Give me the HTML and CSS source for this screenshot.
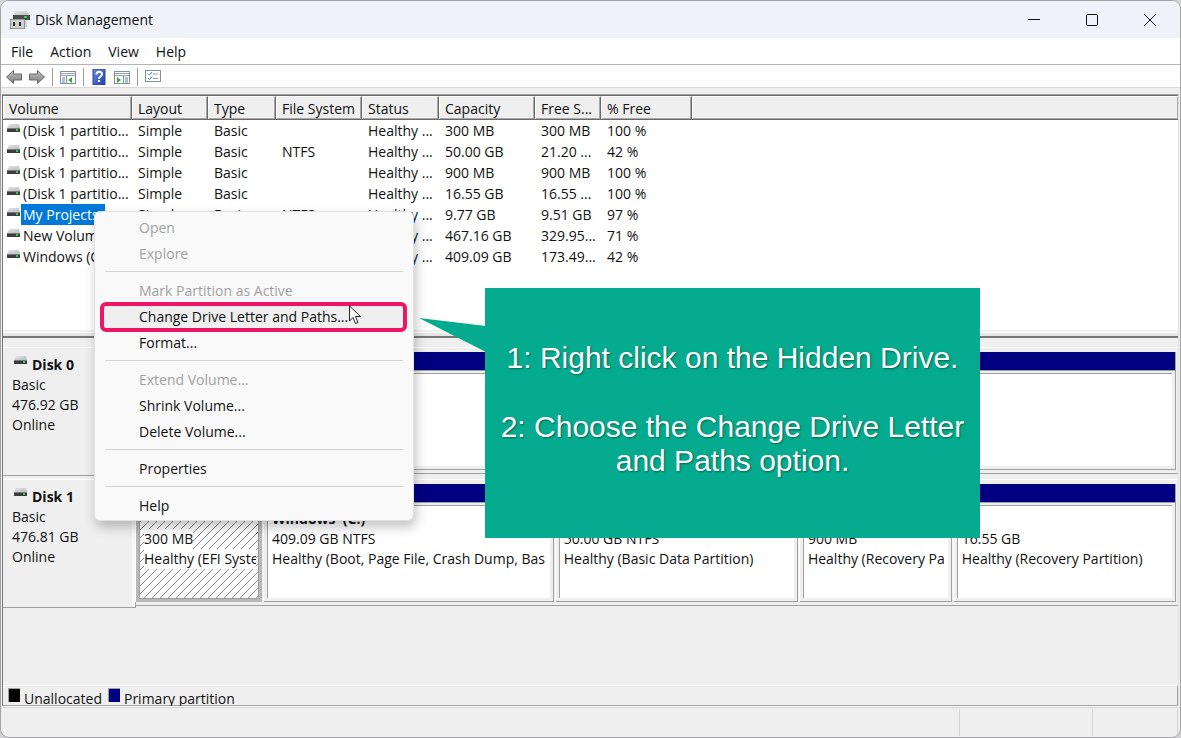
FILE: index.html
```html
<!DOCTYPE html>
<html lang="en">
<head>
<meta charset="utf-8">
<title>Disk Management</title>
<link rel="stylesheet" href="styles.css">
</head>
<body>
<svg class="defs" aria-hidden="true">
  <defs>
    <linearGradient id="lid" x1="0" y1="0" x2="1" y2="1"><stop offset="0" stop-color="#e4e5e7"/><stop offset="1" stop-color="#b9bcc0"/></linearGradient>
    <linearGradient id="help" x1="0" y1="0" x2="1" y2="1"><stop offset="0" stop-color="#6d8be0"/><stop offset="1" stop-color="#1f3fae"/></linearGradient>
    <linearGradient id="arrow" x1="0" y1="0" x2="0" y2="1"><stop offset="0" stop-color="#c4c4c4"/><stop offset="1" stop-color="#7c7c7c"/></linearGradient>
    <symbol id="drive" viewBox="0 0 14 10">
      <path d="M2 0h10l1 4H0z" fill="url(#lid)"/>
      <rect y="4" width="13" height="4" fill="#3b3d40"/>
      <path d="M0 4.500h13" stroke="#77797c"/>
      <rect x="9" y="5" width="2" height="2" fill="#2fd048"/>
    </symbol>
  </defs>
</svg>
<div class="window">
  <header class="titlebar">
    <svg class="app-icon" viewBox="0 0 20 20">
      <path d="M5 1h12l3 5H3z" fill="url(#lid)"/>
      <rect x="3" y="5" width="17" height="5" fill="#4a4d50"/>
      <rect x="14" y="6" width="3" height="2" fill="#2fd048"/>
      <rect x="14" y="10" width="3" height="7" fill="#d2d2d2"/>
      <rect x=".5" y="9.500" width="14" height="9" fill="#d0d0d0" stroke="#959595"/>
      <rect x="3" y="12" width="2" height="4" fill="#222"/><rect x="9" y="12" width="2" height="4" fill="#222"/>
    </svg>
    <h1 class="title">Disk Management</h1>
    <button class="caption" aria-label="Minimize"><svg viewBox="0 0 14 14"><path d="M1 6.500h12"/></svg></button>
    <button class="caption" aria-label="Maximize"><svg viewBox="0 0 14 14"><rect x="1.500" y="1.500" width="11" height="11" rx="1"/></svg></button>
    <button class="caption" aria-label="Close"><svg viewBox="0 0 14 14"><path d="M1 1l12 12M13 1L1 13"/></svg></button>
  </header>
  <nav class="menubar">
    <button>File</button><button>Action</button><button>View</button><button>Help</button>
  </nav>
  <div class="toolbar">
    <button aria-label="Back"><svg viewBox="0 0 16 16"><path d="M.5 8L7.500 1.500V5h8v6h-8v3.500z" fill="url(#arrow)" stroke="#686868"/></svg></button>
    <button aria-label="Forward"><svg viewBox="0 0 16 16"><path d="M15.500 8L8.500 1.500V5h-8v6h8v3.500z" fill="url(#arrow)" stroke="#686868"/></svg></button>
    <span class="divider"></span>
    <button aria-label="Show console tree"><svg viewBox="0 0 16 16"><rect x=".5" y="2.500" width="15" height="12" fill="#fff" stroke="#83909c"/><path d="M1 4.500h14M1 6.500h14" stroke="#93a1ae"/><path d="M6.500 7v8" stroke="#83909c"/><path d="M2 9h3M2 11h3M2 13h3" stroke="#4b89b8"/><path d="M12 8v6L8 11z" fill="#3ca62b"/></svg></button>
    <span class="divider"></span>
    <button aria-label="Help"><svg viewBox="0 0 16 16"><rect x="2" width="12" height="16" fill="url(#help)" stroke="#2b4797" stroke-width="1"/><path d="M5.500 5.500C5.500 2 11 2 11 5c0 2-3 2.500-3 5" fill="none" stroke="#fff" stroke-width="2"/><rect x="7" y="11" width="2" height="2" fill="#fff"/></svg></button>
    <button aria-label="Show action pane"><svg viewBox="0 0 16 16"><rect x=".5" y="2.500" width="15" height="12" fill="#fff" stroke="#83909c"/><path d="M1 4.500h14M1 6.500h14" stroke="#93a1ae"/><path d="M9.500 7v8" stroke="#83909c"/><path d="M11 9h3M11 11h3M11 13h3" stroke="#4b89b8"/><path d="M3 8v6l4-3z" fill="#3ca62b"/></svg></button>
    <span class="divider"></span>
    <button aria-label="Properties"><svg viewBox="0 0 16 16"><rect x=".5" y="1.500" width="15" height="11" fill="#fff" stroke="#83909c"/><path d="M8 5h5M8 9.500h5" stroke="#9a9a9a"/><path d="M3 4.500l1.500 1.500L7 3M3 9l1.500 1.500L7 7.500" fill="none" stroke="#2e7bd0"/></svg></button>
  </div>

  <main class="panes">
    <section class="list">
      <table>
        <colgroup><col class="c-vol"><col class="c-lay"><col class="c-type"><col class="c-fs"><col class="c-stat"><col class="c-cap"><col class="c-free"><col class="c-pct"><col></colgroup>
        <thead><tr><th>Volume</th><th>Layout</th><th>Type</th><th>File System</th><th>Status</th><th>Capacity</th><th>Free S...</th><th>% Free</th><th></th></tr></thead>
        <tbody>
          <tr><td class="vol"><svg class="drive"><use href="#drive"/></svg><span>(Disk 1 partitio...</span></td><td>Simple</td><td>Basic</td><td></td><td>Healthy ...</td><td>300 MB</td><td>300 MB</td><td>100 %</td><td></td></tr>
          <tr><td class="vol"><svg class="drive"><use href="#drive"/></svg><span>(Disk 1 partitio...</span></td><td>Simple</td><td>Basic</td><td>NTFS</td><td>Healthy ...</td><td>50.00 GB</td><td>21.20 ...</td><td>42 %</td><td></td></tr>
          <tr><td class="vol"><svg class="drive"><use href="#drive"/></svg><span>(Disk 1 partitio...</span></td><td>Simple</td><td>Basic</td><td></td><td>Healthy ...</td><td>900 MB</td><td>900 MB</td><td>100 %</td><td></td></tr>
          <tr><td class="vol"><svg class="drive"><use href="#drive"/></svg><span>(Disk 1 partitio...</span></td><td>Simple</td><td>Basic</td><td></td><td>Healthy ...</td><td>16.55 GB</td><td>16.55 ...</td><td>100 %</td><td></td></tr>
          <tr><td class="vol"><svg class="drive"><use href="#drive"/></svg><span class="selected">My Projects</span></td><td>Simple</td><td>Basic</td><td>NTFS</td><td>Healthy ...</td><td>9.77 GB</td><td>9.51 GB</td><td>97 %</td><td></td></tr>
          <tr><td class="vol"><svg class="drive"><use href="#drive"/></svg><span>New Volume</span></td><td>Simple</td><td>Basic</td><td>NTFS</td><td>Healthy ...</td><td>467.16 GB</td><td>329.95...</td><td>71 %</td><td></td></tr>
          <tr><td class="vol"><svg class="drive"><use href="#drive"/></svg><span>Windows (C:)</span></td><td>Simple</td><td>Basic</td><td>NTFS</td><td>Healthy ...</td><td>409.09 GB</td><td>173.49...</td><td>42 %</td><td></td></tr>
        </tbody>
      </table>
    </section>

    <section class="graph">
      <article class="disk">
        <div class="disk-label">
          <h2><svg class="drive"><use href="#drive"/></svg>Disk 0</h2>
          <p>Basic</p><p>476.92 GB</p><p>Online</p>
        </div>
        <div class="volumes">
          <div class="volume"><div class="bar"></div><div class="box"></div></div>
        </div>
      </article>
      <article class="disk">
        <div class="disk-label">
          <h2><svg class="drive"><use href="#drive"/></svg>Disk 1</h2>
          <p>Basic</p><p>476.81 GB</p><p>Online</p>
        </div>
        <div class="volumes">
          <div class="volume v-efi"><div class="bar"></div><div class="box"><b>&nbsp;</b><p>300 MB</p><p>Healthy (EFI System Partition)</p></div></div>
          <div class="volume v-win"><div class="bar"></div><div class="box"><b>Windows&nbsp; (C:)</b><p>409.09 GB NTFS</p><p>Healthy (Boot, Page File, Crash Dump, Basic Data Partition)</p></div></div>
          <div class="volume v-data"><div class="bar"></div><div class="box"><b>&nbsp;</b><p>50.00 GB NTFS</p><p>Healthy (Basic Data Partition)</p></div></div>
          <div class="volume v-rec"><div class="bar"></div><div class="box"><b>&nbsp;</b><p>900 MB</p><p>Healthy (Recovery Partition)</p></div></div>
          <div class="volume v-rec2"><div class="bar"></div><div class="box"><b>&nbsp;</b><p>16.55 GB</p><p>Healthy (Recovery Partition)</p></div></div>
        </div>
      </article>
    </section>
    <div class="legend">
      <span class="swatch black"></span><span class="key">Unallocated</span>
      <span class="swatch navy"></span><span class="key">Primary partition</span>
    </div>
  </main>
  <footer class="statusbar"><span></span><span></span><span></span></footer>

  <div class="context-menu" role="menu">
    <button disabled>Open</button>
    <button disabled>Explore</button>
    <hr>
    <button disabled>Mark Partition as Active</button>
    <button class="marked">Change Drive Letter and Paths...</button>
    <button>Format...</button>
    <hr>
    <button disabled>Extend Volume...</button>
    <button>Shrink Volume...</button>
    <button>Delete Volume...</button>
    <hr>
    <button>Properties</button>
    <hr>
    <button>Help</button>
  </div>
  <svg class="cursor" viewBox="0 0 14 20"><path d="M1.500 1v15l3.500-3.500 2.500 6 2.500-1-2.500-6h5z" fill="#fff" stroke="#222"/></svg>

  <svg class="pointer" viewBox="0 0 68 36"><path d="M1 1l67 8v26z" fill="#05ab8e"/></svg>
  <aside class="callout">
    <p>1: Right click on the Hidden Drive.</p>
    <p>2: Choose the Change Drive Letter and Paths option.</p>
  </aside>
</div>
</body>
</html>
```
FILE: styles.css
```css
* { box-sizing: border-box; }

body {
  margin: 0;
  background: #d4d4d6;
  color: #111;
  font: 14px/20px "Open Sans", "Noto Sans", sans-serif;
}

h1, h2, p { margin: 0; font-size: inherit; }
p { white-space: nowrap; }

button {
  padding: 0;
  border: 0;
  background: none;
  color: inherit;
  font: inherit;
}

.defs { position: absolute; width: 0; height: 0; }

.window {
  position: relative;
  display: flex;
  flex-direction: column;
  min-height: 100vh;
  border: 1px solid #a3a3a6;
  border-radius: 9px;
  background: #efefef;
  overflow: hidden;
}

/* Title, menu and tool bars */
.titlebar {
  display: flex;
  align-items: center;
  height: 37px;
  padding: 0 1px 0 9px;
  background: #eff2f8;
}
.app-icon { width: 20px; height: 20px; margin-right: 5px; }
.title { flex: 1; font-weight: 400; }
.caption { width: 58px; height: 37px; }
.caption svg {
  display: block;
  width: 14px;
  height: 14px;
  margin: 0 auto;
  fill: none;
  stroke: #111;
}

.menubar {
  display: flex;
  gap: 17px;
  height: 27px;
  padding: 2px 0 0 10px;
  border-bottom: 1px solid #b3b3b8;
  background: #fff;
}

.toolbar {
  display: flex;
  align-items: center;
  gap: 7px;
  height: 23px;
  padding: 2px 0 0 5px;
  border-bottom: 1px solid #d8d8d8;
  background: #fff;
}
.toolbar button, .toolbar svg { display: block; width: 16px; height: 16px; }
.divider { width: 1px; height: 18px; background: #999; }

/* Panes */
.panes {
  display: flex;
  flex: 1;
  flex-direction: column;
  margin: 6px 1px 0;
  border: 1px solid #a0a0a0;
  border-width: 1px 1px 0 1px;
  border-left-color: #777;
  border-right-color: #e2e2e2;
}

.list {
  height: 243px;
  border-top: 1px solid #696969;
  border-bottom: 2px solid #777;
  background: linear-gradient(#fff, #fff) 0 100% / 100% 4px no-repeat, linear-gradient(#efefef, #efefef) 0 100% / 100% 6px no-repeat, #fff;
  box-shadow: inset 0 -3px #e6e6e6;
}
.list table {
  width: 100%;
  border-collapse: separate;
  border-spacing: 0;
  table-layout: fixed;
}
.c-vol { width: 129px; }
.c-lay { width: 76px; }
.c-type { width: 68px; }
.c-fs { width: 86px; }
.c-stat { width: 77px; }
.c-cap { width: 96px; }
.c-free { width: 66px; }
.c-pct { width: 91px; }

th, td {
  padding: 0 0 0 6px;
  font-weight: 400;
  text-align: left;
  white-space: nowrap;
}
th {
  height: 24px;
  padding-top: 2px;
  border-top: 1px solid #fff;
  border-right: 1px solid #696969;
  border-bottom: 1px solid #696969;
  background: #efefef;
  box-shadow: inset 1px 0 #fff, inset -1px -1px #a8a8a8;
}
th:last-child { border-right: 0; }
td { height: 21px; }
td.vol { padding-left: 4px; overflow: hidden; }
.vol span {
  display: inline-block;
  height: 21px;
  padding: 0 2px;
  line-height: 21px;
  vertical-align: top;
}
.vol .selected { padding-right: 6px; background: #0078d7; color: #fff; }
.drive { width: 14px; height: 10px; }
.vol .drive { margin-top: 4px; vertical-align: top; }

/* Graphical view */
.graph { flex: 1; padding-top: 9px; }
.disk { display: flex; align-items: flex-start; height: 132px; }
.disk-label {
  width: 133px;
  height: 129px;
  padding: 8px 9px;
  border: 1px solid #a0a0a0;
  border-width: 0 1px 1px 0;
  box-shadow: inset 0 1px #fff, inset -3px 0 #f8f8f8;
}
.disk-label h2 { font-weight: 700; }
.disk-label .drive { margin: 0 4px 4px 2px; }
.volumes {
  display: flex;
  flex: 1;
  gap: 2px;
  min-width: 0;
  height: 127px;
  padding: 4px 2px 3px 0;
  border-top: 1px solid #fff;
  border-bottom: 1px solid #a0a0a0;
}
.volume {
  display: flex;
  flex: 1 1 0;
  flex-direction: column;
  min-width: 0;
  border: 1px solid #a0a0a0;
  border-width: 0 1px 1px 0;
  box-shadow: -1px 0 #fff;
}
.v-efi { flex-grow: 127; }
.v-win { flex-grow: 291; }
.v-data { flex-grow: 243; }
.v-rec { flex-grow: 152; }
.v-rec2 { flex-grow: 223; }
.bar { height: 19px; border-bottom: 1px solid #a0a0a0; background: #000080; }
.box {
  flex: 1;
  margin: 2px 3px 3px;
  padding: 3px 4px 0;
  border: 1px solid #a0a0a0;
  border-width: 1px 0 0 1px;
  background: #fff;
}
.box b { display: block; height: 20px; }
.box p { overflow: hidden; }
.v-efi { border: 0; background: #b8b8b8; }
.v-efi .box {
  padding-right: 2px;
  border-width: 1px;
  background: linear-gradient(135deg, transparent 46%, #8c8c8c 46%, #8c8c8c 54%, transparent 54%) 0 0 / 8px 8px #fff;
}
.v-efi p { width: fit-content; max-width: 100%; background: #fff; }

.legend {
  display: flex;
  gap: 4px;
  height: 21px;
  padding: 2px 5px 0;
  border-top: 1px solid #fff;
  border-right: 1px solid #a0a0a0;
  border-bottom: 1px solid #a0a0a0;
}
.swatch { width: 12px; height: 14px; border: 1px solid #a0a0a0; border-width: 1px 0 0 1px; }
.key { padding: 1px 2px 0 0; }
.black { background: #000; }
.navy { background: #000080; }

.statusbar {
  display: flex;
  height: 31px;
  padding: 2px 2px 1px 0;
  border-top: 1px solid #fff;
  box-shadow: inset 0 1px #d4d4d4;
}
.statusbar span { width: 85px; border-right: 1px solid #d4d4d4; }
.statusbar span:first-child { flex: 1; }
.statusbar span:nth-child(2) { width: 133px; }

/* Context menu */
.context-menu {
  position: absolute;
  top: 210px;
  left: 93px;
  display: flex;
  flex-direction: column;
  width: 320px;
  padding: 3px 4px 1px;
  border: 1px solid #e0e0e0;
  border-radius: 6px;
  background: #f9f9f9;
  box-shadow: 2px 6px 12px rgba(0, 0, 0, .24);
}
.context-menu button { height: 26px; padding-left: 40px; text-align: left; }
.context-menu button:disabled { color: #a2a2a2; }
.context-menu hr { width: 298px; height: 1px; margin: 4px auto 6px; border: 0; background: #d4d4d4; }
.context-menu .marked {
  margin: 0 4px 0 3px;
  padding-left: 37px;
  border-radius: 4px;
  background: #efefef;
  outline: 4px solid #ee1664;
  outline-offset: -2px;
}

.cursor { position: absolute; top: 304px; left: 347px; width: 14px; height: 20px; }

/* Annotation */
.pointer { position: absolute; top: 316px; left: 417px; width: 68px; height: 36px; }
.callout {
  position: absolute;
  top: 287px;
  left: 484px;
  display: flex;
  flex-direction: column;
  justify-content: center;
  gap: 35px;
  width: 495px;
  height: 250px;
  padding: 0 12px 8px;
  background: #05ab8e;
  color: #fff;
  font: 30px/34px "Liberation Sans", Arial, sans-serif;
  text-align: center;
  text-shadow: 1px 1px 2px rgba(0, 0, 0, .4);
}
.callout p { white-space: normal; }
```
